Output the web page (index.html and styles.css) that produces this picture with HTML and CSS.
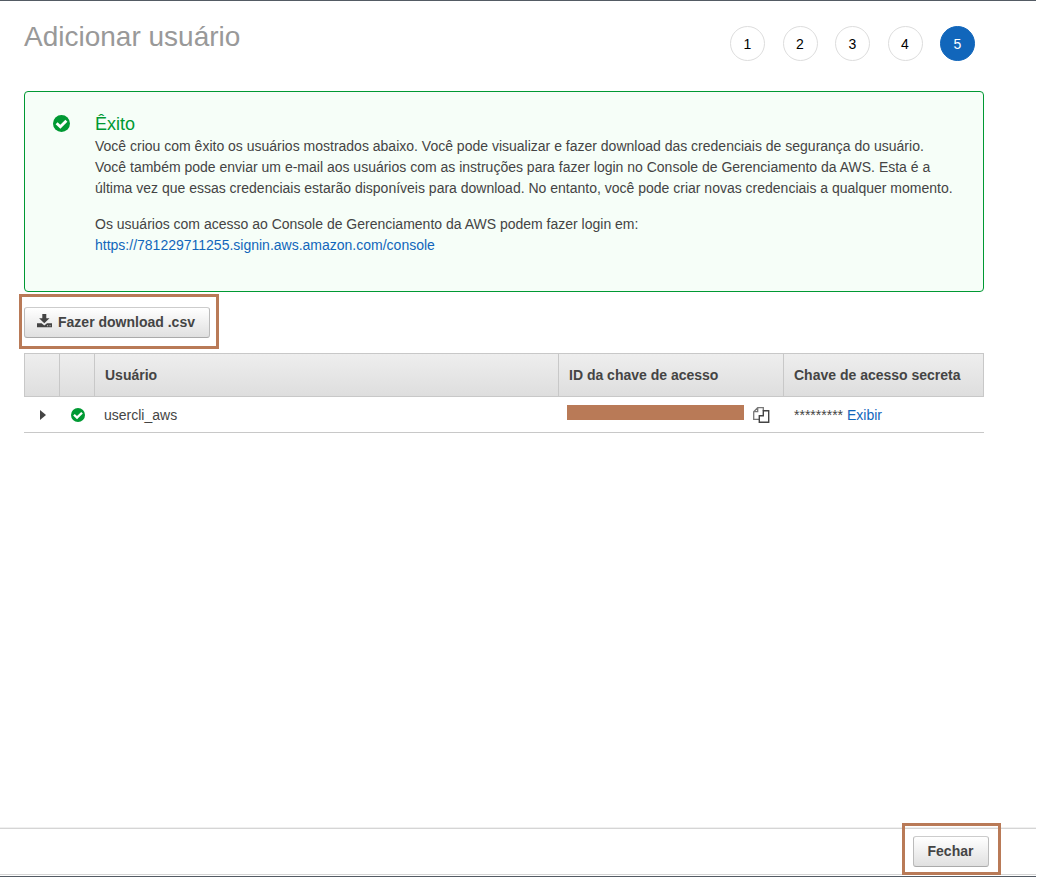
FILE: index.html
```html
<!DOCTYPE html>
<html lang="pt-BR">
<head>
<meta charset="utf-8">
<title>Adicionar usuário</title>
<link rel="stylesheet" href="styles.css">
</head>
<body>
<svg class="defs" width="0" height="0">
  <symbol id="check" viewBox="0 0 16 16">
    <circle cx="8" cy="8" r="8" fill="#093"/>
    <path d="M3.4 7.7 6.9 11 12.6 5.4" fill="none" stroke="#fff" stroke-width="2.7"/>
  </symbol>
</svg>
<div class="page">
  <main class="content">
    <header class="header">
      <h1 class="title">Adicionar usuário</h1>
      <ol class="steps">
        <li class="step">1</li>
        <li class="step">2</li>
        <li class="step">3</li>
        <li class="step">4</li>
        <li class="step active">5</li>
      </ol>
    </header>
    <section class="alert">
      <svg class="alert-icon"><use href="#check"/></svg>
      <div class="alert-body">
        <h2 class="alert-title">Êxito</h2>
        <p class="text">Você criou com êxito os usuários mostrados abaixo. Você pode visualizar e fazer download das credenciais de segurança do usuário.<br>Você também pode enviar um e-mail aos usuários com as instruções para fazer login no Console de Gerenciamento da AWS. Esta é a<br>última vez que essas credenciais estarão disponíveis para download. No entanto, você pode criar novas credenciais a qualquer momento.</p>
        <p class="text">Os usuários com acesso ao Console de Gerenciamento da AWS podem fazer login em:<br><a class="link">https://781229711255.signin.aws.amazon.com/console</a></p>
      </div>
    </section>
    <div class="highlight download">
      <button class="button">
        <svg class="download-icon" viewBox="0 0 15 14"><path fill="#444" d="M5.3 0h4v4.3h3.2L7.3 9.2 2.1 4.3h3.2z"/><path fill="#444" fill-rule="evenodd" d="M0 9.3h4.6l2.7 2.2L10 9.3h5v4H0zM10.2 11.3v.9h.9v-.9zM12.6 11.3v.9h.9v-.9z"/></svg>Fazer download .csv
      </button>
    </div>
    <div class="table">
      <div class="row head">
        <div class="cell"></div>
        <div class="cell"></div>
        <div class="cell">Usuário</div>
        <div class="cell">ID da chave de acesso</div>
        <div class="cell">Chave de acesso secreta</div>
      </div>
      <div class="row body">
        <div class="cell icon"><svg class="arrow" viewBox="0 0 6 10"><path d="M0 0 6 5 0 10z" fill="#444"/></svg></div>
        <div class="cell icon"><svg class="status"><use href="#check"/></svg></div>
        <div class="cell">usercli_aws</div>
        <div class="cell key"><span class="redacted"></span><svg class="copy" viewBox="0 0 17 16" fill="none"><path d="M6 12.4H.7V4.7L4.7.7h5.6v3M4.7.7v4h-4" stroke="#777" stroke-width="1.3"/><path d="M10.3 3.7h5.4v11.6H6.3V8.7h4z" fill="#fff" stroke="#444" stroke-width="1.4"/></svg></div>
        <div class="cell secret">********* <a class="link">Exibir</a></div>
      </div>
    </div>
  </main>
  <footer class="footer">
    <div class="highlight close"><button class="button">Fechar</button></div>
  </footer>
</div>
</body>
</html>
```
FILE: styles.css
```css
* { box-sizing: border-box; }
body { margin: 0; background: #fff; color: #444; font: 14px/21px "Liberation Sans", Arial, sans-serif; }
.defs { position: absolute; }
.page { width: 1036px; height: 877px; display: flex; flex-direction: column; border-top: 1px solid #545b64; border-bottom: 1px solid #545b64; }
.content { flex: 1; width: 984px; padding-left: 24px; }
.header { display: flex; justify-content: space-between; height: 90px; padding: 20px 9px 0 0; }
.title { margin: 0; color: #999; font-size: 28px; font-weight: 400; line-height: 32px; }
.steps { display: flex; gap: 17.5px; margin: 5px 0 0; padding: 0; list-style: none; }
.step { width: 35px; height: 35px; border: 1px solid #ddd; border-radius: 50%; color: #000; line-height: 35px; text-align: center; }
.step.active { background: #1166bb; border-color: #1166bb; color: #fff; }
.alert { display: flex; height: 201px; padding: 22px 0 0 27.5px; border: 1px solid #093; border-radius: 4px; background: #f6fef8; }
.alert-icon { width: 17px; height: 17px; margin: .5px 25.5px 0 0; }
.alert-title { margin: 0 0 1px; color: #093; font-size: 18px; font-weight: 400; line-height: 21px; }
.text { margin: 0 0 15px; white-space: nowrap; }
.link { color: #1166bb; }
.highlight { border: 3px solid #b97a57; }
.download { width: 200px; height: 55px; margin: 2px 0 0 -5px; padding: 10px 0 0 2px; }
.button { display: flex; align-items: center; justify-content: center; height: 31px; padding: 0 1px 0 0; border: 1px solid #bbb; border-color: #ccc #bbb #aaa; border-radius: 3px; background: linear-gradient(#fff, #e0e0e0); color: #444; font: bold 14px/21px "Liberation Sans", Arial, sans-serif; }
.download .button { width: 186px; padding-right: 2px; }
.download-icon { width: 15px; height: 14px; margin: -3px 6px 0 0; }
.table { margin-top: 4px; }
.row { display: grid; grid-template-columns: 35px 35px 464px 225px 201px; }
.head { grid-template-columns: 34px 35px 464px 225px 200px; height: 44px; border: 1px solid #c8c8c8; background: linear-gradient(#eee, #dedede); font-weight: bold; line-height: 42px; }
.head .cell { padding-left: 10px; border-left: 1px solid #c8c8c8; }
.head .cell:first-child { border-left: 0; }
.body { height: 36px; border-bottom: 1px solid #c8c8c8; line-height: 36px; }
.body .cell { padding-left: 10px; }
.body .icon { display: flex; align-items: center; padding: 0; }
.body .secret { padding-left: 11px; }
.arrow { width: 6px; height: 10px; margin-left: 16px; }
.status { width: 14px; height: 14px; margin-left: 12px; }
.body .key { display: flex; padding-left: 9px; }
.redacted { width: 177px; height: 15px; margin-top: 8px; background: #b97a57; }
.copy { width: 17px; height: 16px; margin: 10px 0 0 9px; }
.footer { display: flex; justify-content: flex-end; height: 47px; margin-bottom: 1px; padding-right: 35px; border-top: 1px solid #d5d5d5; border-bottom: 1px solid #d5d5d5; box-shadow: 0 -1px #f0f0f0; }
.close { width: 99px; height: 52px; margin-top: -6px; padding: 10px 0 0 8px; }
.close .button { width: 76px; }
```
